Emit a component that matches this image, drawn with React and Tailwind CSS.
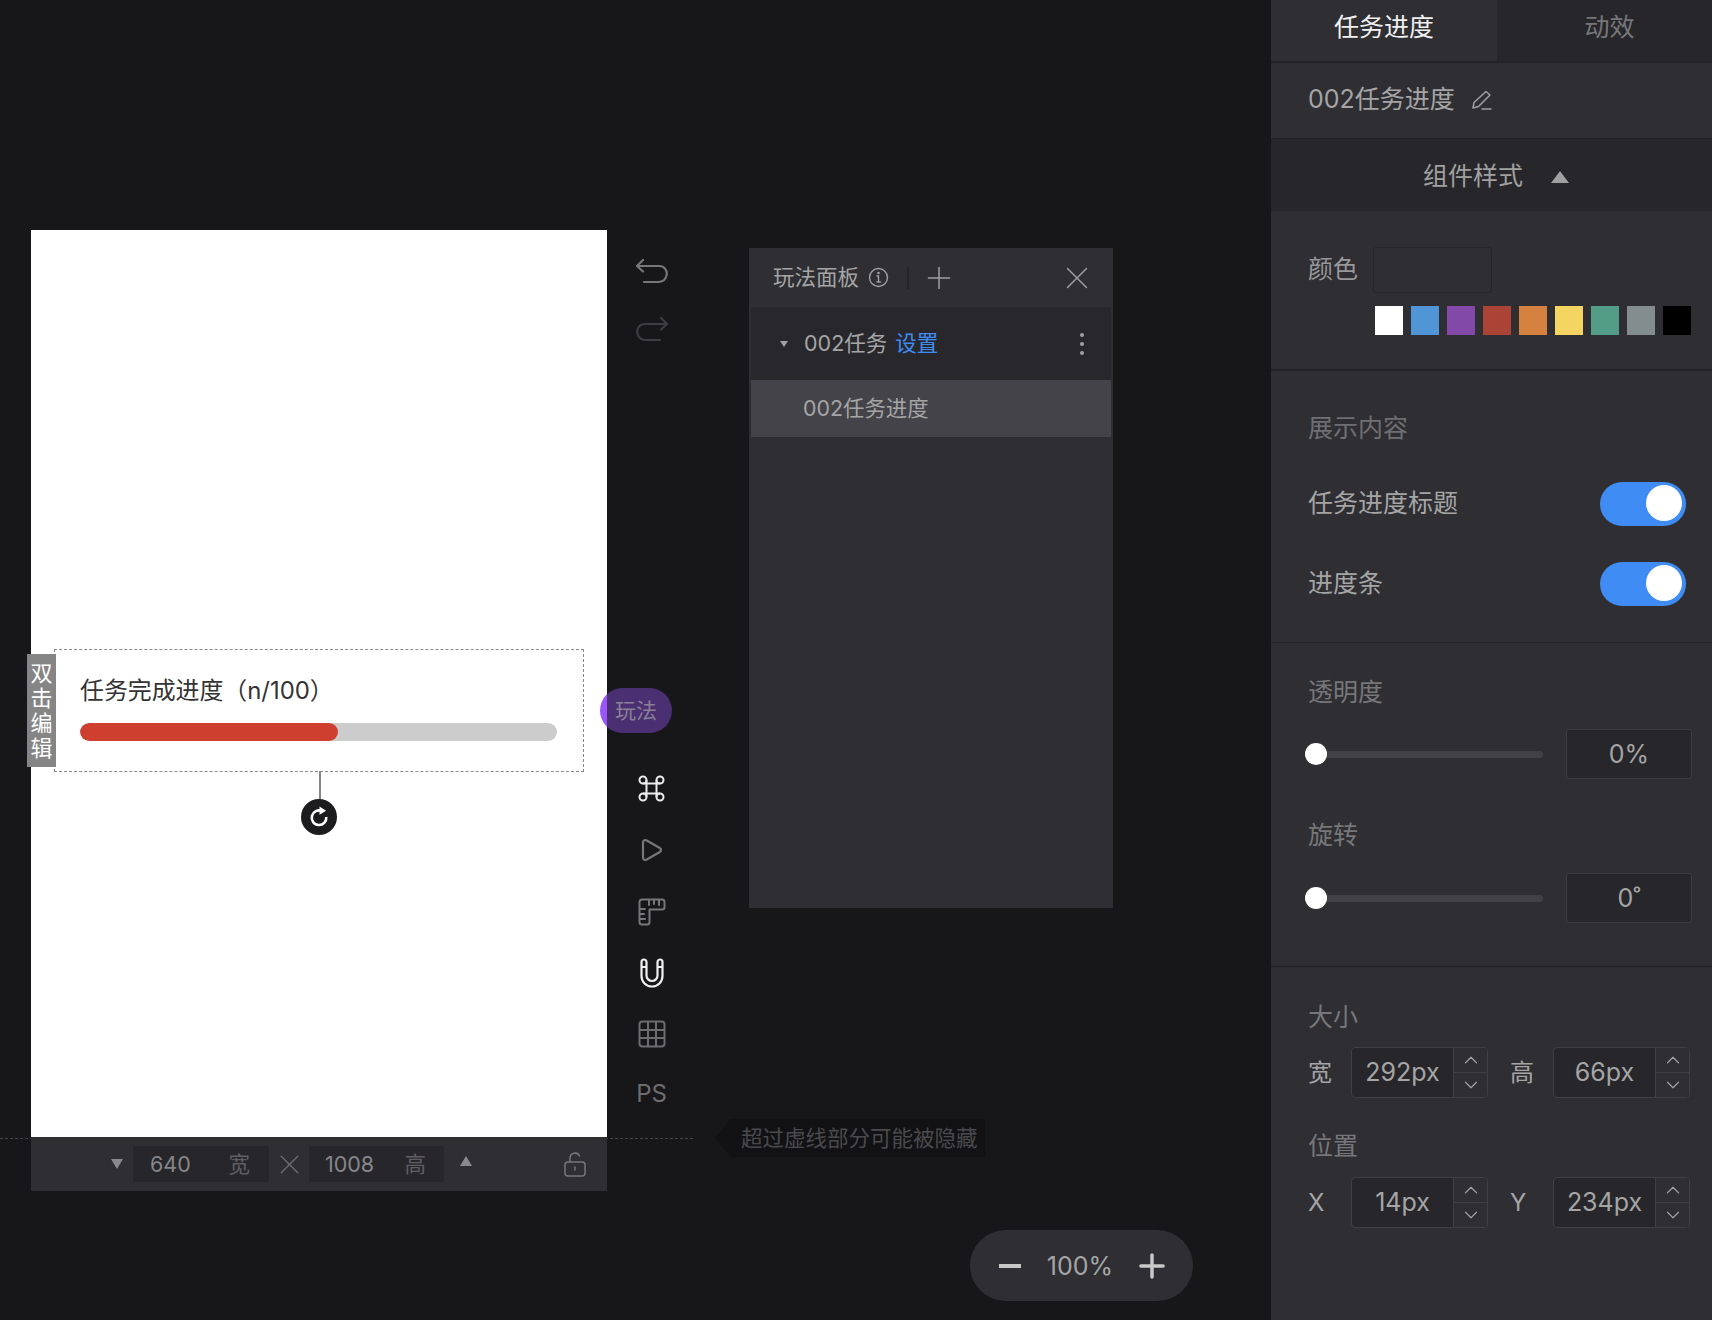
import React from 'react';
import { X, Plus, ChevronUp, ChevronDown } from 'lucide-react';

const swatches = ['#ffffff', '#5095d6', '#8249a8', '#ac4337', '#d5813f', '#f5d562', '#539c85', '#848d8e', '#000000'];

function UndoIcon() {
    return (
        <svg width="32" height="30" viewBox="0 0 32 30" fill="none" stroke="#77777a" strokeWidth="2.2" strokeLinecap="round" strokeLinejoin="round">
            <path d="M7 2 1 8l6 5.5" />
            <path d="M1 8h22a7.5 7.5 0 0 1 7.5 9.5c-1 4-4 6.500-8 6.500H8" />
        </svg>
    );
}

function RedoIcon() {
    return (
        <svg width="32" height="30" viewBox="0 0 32 30" fill="none" stroke="#3d3d41" strokeWidth="2.2" strokeLinecap="round" strokeLinejoin="round">
            <path d="M25 2l6 6-6 5.500" />
            <path d="M31 8H9a7.500 7.500 0 0 0-7.500 9.500c1 4 4 6.500 8 6.500H24" />
        </svg>
    );
}

function CommandIcon() {
    return (
        <svg width="27" height="27" viewBox="0 0 27 27" fill="none" stroke="#ececec" strokeWidth="2">
            <circle cx="5" cy="5" r="3.500" />
            <circle cx="22" cy="5" r="3.500" />
            <circle cx="5" cy="22" r="3.500" />
            <circle cx="22" cy="22" r="3.500" />
            <path d="M8.500 5v17M18.500 5v17M5 8.500h17M5 18.500h17" />
        </svg>
    );
}

function PlayIcon() {
    return (
        <svg width="22" height="24" viewBox="0 0 22 24" fill="none" stroke="#77777a" strokeWidth="2.2" strokeLinejoin="round">
            <path d="M2 4.500c0-2 1.700-3 3.300-2.200l13.500 7.700c1.600 1 1.600 3 0 4L5.300 21.700C3.700 22.500 2 21.500 2 19.500z" />
        </svg>
    );
}

function RulerIcon() {
    return (
        <svg width="28" height="28" viewBox="0 0 28 28" fill="none" stroke="#77777a" strokeWidth="2" strokeLinecap="round" strokeLinejoin="round">
            <path d="M4 1.500h20a2.500 2.500 0 0 1 2.500 2.500v5a2.500 2.500 0 0 1-2.500 2.500H11.500V24a2.500 2.500 0 0 1-2.500 2.500H4A2.500 2.500 0 0 1 1.500 24V4A2.500 2.500 0 0 1 4 1.500z" />
            <path d="M11 2v5M16 2v4M21 2v5M2 11h5M2 16h4M2 21h5" />
        </svg>
    );
}

function MagnetIcon() {
    return (
        <svg width="24" height="30" viewBox="0 0 24 30" fill="none" stroke="#f0f0f0" strokeWidth="2.2" strokeLinecap="round" strokeLinejoin="round">
            <path d="M1.500 4a2.500 2.500 0 0 1 5 0v13.500a5.500 5.500 0 0 0 11 0V4a2.500 2.500 0 0 1 5 0v14a10.500 10.500 0 0 1-21 0z" />
            <path d="M2 9h4M18 9h4" />
        </svg>
    );
}

function GridIcon() {
    return (
        <svg width="28" height="28" viewBox="0 0 28 28" fill="none" stroke="#6d6d70" strokeWidth="2">
            <rect x="1.500" y="1.500" width="25" height="25" rx="3" />
            <path d="M10 2v24M18 2v24M2 10h24M2 18h24" />
        </svg>
    );
}

function PencilIcon() {
    return (
        <svg width="22" height="22" viewBox="0 0 22 22" fill="none" stroke="#a0a0a0" strokeWidth="1.500" strokeLinecap="round" strokeLinejoin="round">
            <path d="M15 2.500 19 6 7.500 17.500 2 19l1-5.500z" />
            <path d="M11 20h9" />
        </svg>
    );
}

function InfoIcon() {
    return (
        <svg width="21" height="21" viewBox="0 0 21 21" fill="none" stroke="#a0a0a0" strokeWidth="1.400" strokeLinecap="round">
            <circle cx="10.500" cy="10.500" r="9" />
            <path d="M9 9h1.500v6M9 15h3.500" />
            <circle cx="10.500" cy="6" r="0.600" />
        </svg>
    );
}

function RotateIcon() {
    return (
        <svg width="22" height="22" viewBox="0 0 22 22" fill="none" stroke="#ffffff" strokeWidth="2.600">
            <path d="M14 5a7.300 7.300 0 1 0 4.300 6" />
            <path d="M11.500 0.500 18 4.800l-6.500 4z" fill="#ffffff" stroke="none" />
        </svg>
    );
}

function LockIcon() {
    return (
        <svg width="22" height="25" viewBox="0 0 22 25" fill="none" stroke="#77777a" strokeWidth="1.500" strokeLinecap="round">
            <rect x="1" y="10" width="20" height="14" rx="3" />
            <path d="M6 10V6a5 5 0 0 1 9.500-2" />
            <path d="M11 15v3" />
        </svg>
    );
}

function Toggle() {
    return (
        <div className="w-[86px] h-[44px] rounded-full bg-[#3f8cf5] relative">
            <div className="absolute left-[46px] top-[3px] w-[36px] h-[36px] rounded-full bg-white"></div>
        </div>
    );
}

function SliderRow({ value, className }) {
    return (
        <div className={"flex items-center pl-[34px] " + className}>
            <div className="w-[238px] h-[7px] rounded-full bg-[#414146] relative">
                <div className="absolute -left-[0px] -top-[8px] w-[22px] h-[22px] rounded-full bg-white"></div>
            </div>
            <div className="ml-[23px] w-[126px] h-[50px] pt-[2px] flex items-center justify-center rounded-[3px] border border-[#3c3c41] bg-[#27272b] text-[25px] text-[#a5a5a5]">
                {value}
            </div>
        </div>
    );
}

function Stepper({ value }) {
    return (
        <div className="flex w-[137px] h-full rounded-[4px] border border-[#3f3f44] bg-[#27272b]">
            <div className="w-[101px] flex items-center justify-center text-[25px] text-[#a5a5a5]">{value}</div>
            <div className="flex-1 flex flex-col border-l border-[#3f3f44] bg-[#2e2e33] rounded-r-[4px] text-[#a0a0a0]">
                <div className="flex-1 flex items-center justify-center border-b border-[#3f3f44]">
                    <ChevronUp size={22} strokeWidth={1.300} />
                </div>
                <div className="flex-1 flex items-center justify-center">
                    <ChevronDown size={22} strokeWidth={1.300} />
                </div>
            </div>
        </div>
    );
}

function StepperRow({ a, b, valueA, valueB }) {
    return (
        <div className="h-[51px] flex items-center pl-[37px]">
            <div className="w-[43px] text-[24px] text-[#a5a5a5]">{a}</div>
            <Stepper value={valueA} />
            <div className="w-[65px] pl-[22px] text-[24px] text-[#a5a5a5]">{b}</div>
            <Stepper value={valueB} />
        </div>
    );
}

function Canvas() {
    return (
        <div className="w-[576px] shrink-0">
            <div className="h-[907px] bg-white relative">
                <div className="absolute left-[23px] top-[419px] w-[530px] h-[123px] border border-dashed border-[#8a8a8a] pl-[25px] pt-[22px]">
                    <div className="text-[23.900px] leading-[38px] text-[#333333] whitespace-nowrap">任务完成进度（n/100）</div>
                    <div className="mt-[13px] w-[477px] h-[18px] rounded-full bg-[#cccccc] overflow-hidden">
                        <div className="w-[258px] h-full rounded-full bg-[#cf3f2f]"></div>
                    </div>
                </div>
                <div className="absolute -left-[4px] top-[424px] w-[29px] h-[113px] bg-[#858585] flex items-center justify-center text-center text-[22px] leading-[25px] text-white">
                    双<br />击<br />编<br />辑
                </div>
                <div className="absolute left-[288px] top-[541px] w-[2px] h-[30px] bg-[#858585]"></div>
                <div className="absolute left-[270px] top-[569px] w-[36px] h-[36px] rounded-full bg-[#1c1c1f] flex items-center justify-center">
                    <RotateIcon />
                </div>
            </div>
            <div className="h-[54px] bg-[#2e2e33] relative z-10 flex items-center text-[21.500px] text-[#86868a]">
                <div className="ml-[80px] w-0 h-0 border-x-[6px] border-x-transparent border-t-[10px] border-t-[#8a8a8e]"></div>
                <div className="ml-[10px] w-[136px] h-[36px] rounded-[3px] bg-[#27272b] flex items-center justify-between pl-[17px] pr-[19px]">
                    <span>640</span><span className="text-[#5f5f63]">宽</span>
                </div>
                <div className="w-[40px] flex justify-center text-[#6d6d70]"><X size={33} strokeWidth={1} /></div>
                <div className="w-[135px] h-[36px] rounded-[3px] bg-[#27272b] flex items-center justify-between pl-[16px] pr-[18px]">
                    <span>1008</span><span className="text-[#5f5f63]">高</span>
                </div>
                <div className="ml-[16px] -mt-[6px] w-0 h-0 border-x-[6px] border-x-transparent border-b-[10px] border-b-[#8a8a8e]"></div>
                <div className="ml-[92px]"><LockIcon /></div>
            </div>
        </div>
    );
}

function ToolColumn() {
    return (
        <div className="w-[89px] shrink-0 flex flex-col items-center pt-[14px]">
            <div className="h-[58px] flex items-center"><UndoIcon /></div>
            <div className="h-[58px] flex items-center"><RedoIcon /></div>
            <div className="relative z-20 mt-[328px] mb-[24px] self-start -ml-[7px] w-[72px] h-[45px] rounded-full bg-[linear-gradient(90deg,#9a55fb_7px,#4a2f73_7px)] flex items-center justify-center text-[21px] text-[#8b8194]">
                玩法
            </div>
            <div className="h-[62px] flex items-center"><CommandIcon /></div>
            <div className="h-[62px] flex items-center"><PlayIcon /></div>
            <div className="h-[61px] flex items-center"><RulerIcon /></div>
            <div className="h-[61px] flex items-center"><MagnetIcon /></div>
            <div className="h-[61px] flex items-center"><GridIcon /></div>
            <div className="h-[60px] flex items-center text-[24px] text-[#6d6d70]">PS</div>
        </div>
    );
}

function PlayPanel() {
    return (
        <div className="ml-[53px] mt-[18px] w-[364px] h-[660px] bg-[#2e2e33] shrink-0 flex flex-col">
            <div className="h-[59px] flex items-center pl-[24px] text-[21.500px] text-[#a5a5a5]">
                <span>玩法面板</span>
                <span className="ml-[9px]"><InfoIcon /></span>
                <span className="ml-[18px] w-[2px] h-[22px] bg-[#252529]"></span>
                <span className="ml-[12px] text-[#a0a0a0]"><Plus size={36} strokeWidth={1} /></span>
                <span className="ml-auto mr-[17px] text-[#a0a0a0]"><X size={38} strokeWidth={0.900} /></span>
            </div>
            <div className="mx-[2px] h-[73px] bg-[#28282c] flex items-center text-[21.500px] text-[#a5a5a5]">
                <div className="ml-[29px] w-0 h-0 border-x-[4px] border-x-transparent border-t-[6px] border-t-[#a0a0a0]"></div>
                <span className="ml-[16px]">002任务</span>
                <span className="ml-[8px] text-[#3f8cf3]">设置</span>
                <div className="ml-auto mr-[27px] flex flex-col gap-[5px]">
                    <div className="w-[4px] h-[4px] rounded-full bg-[#a0a0a0]"></div>
                    <div className="w-[4px] h-[4px] rounded-full bg-[#a0a0a0]"></div>
                    <div className="w-[4px] h-[4px] rounded-full bg-[#a0a0a0]"></div>
                </div>
            </div>
            <div className="mx-[2px] h-[57px] bg-[#434349] flex items-center pl-[52px] text-[21.400px] text-[#a5a5a5]">002任务进度</div>
        </div>
    );
}

function SidePanel() {
    return (
        <div className="w-[441px] h-full shrink-0 bg-[#2e2e33] flex flex-col">
            <div className="h-[63px] flex border-b-2 border-[#232327] text-[25px]">
                <div className="w-[226px] pb-[6px] flex items-center justify-center text-[#f0f0f0]">任务进度</div>
                <div className="flex-1 pb-[6px] flex items-center justify-center pl-[10px] bg-[#27272b] text-[#77777a]">动效</div>
            </div>
            <div className="h-[75px] pb-[2px] flex items-center pl-[37px] text-[25px] text-[#a5a5a5]">
                <span>002任务进度</span>
                <span className="ml-[16px]"><PencilIcon /></span>
            </div>
            <div className="h-[73px] pt-[4px] bg-[#27272b] border-t border-[#232327] flex items-center pl-[152px] text-[25px] text-[#a0a0a0]">
                <span>组件样式</span>
                <div className="ml-[28px] w-0 h-0 border-x-[9px] border-x-transparent border-b-[12px] border-b-[#a0a0a0]"></div>
            </div>
            <div className="h-[160px] border-b-2 border-[#232327] pt-[36px]">
                <div className="flex items-center pl-[37px]">
                    <span className="w-[65px] text-[25px] text-[#98989a]">颜色</span>
                    <div className="w-[119px] h-[46px] rounded-[3px] border border-[#26262a]"></div>
                </div>
                <div className="mt-[13px] ml-[104px] flex gap-[8px]">
                    {swatches.map((c) => (
                        <div key={c} className="w-[28px] h-[29px]" style={{ backgroundColor: c }}></div>
                    ))}
                </div>
            </div>
            <div className="h-[272px] border-b border-[#26262a] pl-[37px]">
                <div className="pt-[38px] text-[25px] leading-[38px] text-[#6f6f73]">展示内容</div>
                <div className="mt-[35px] flex items-center justify-between h-[44px] text-[25px] text-[#a5a5a5] w-[378px]">
                    <span>任务进度标题</span><Toggle />
                </div>
                <div className="mt-[36px] flex items-center justify-between h-[44px] text-[25px] text-[#a5a5a5] w-[378px]">
                    <span>进度条</span><Toggle />
                </div>
            </div>
            <div className="h-[324px] border-b border-[#1f1f23]">
                <div className="pt-[30px] pl-[37px] text-[25px] leading-[38px] text-[#77777a]">透明度</div>
                <SliderRow value="0%" className="mt-[18px]" />
                <div className="pt-[37px] pl-[37px] text-[25px] leading-[38px] text-[#77777a]">旋转</div>
                <SliderRow value="0˚" className="mt-[19px]" />
            </div>
            <div className="flex-1">
                <div className="pt-[31px] pl-[37px] text-[25px] leading-[38px] text-[#77777a]">大小</div>
                <div className="mt-[11px]"><StepperRow a="宽" b="高" valueA="292px" valueB="66px" /></div>
                <div className="mt-[29px] pl-[37px] text-[25px] leading-[38px] text-[#77777a]">位置</div>
                <div className="mt-[12px]"><StepperRow a="X" b="Y" valueA="14px" valueB="234px" /></div>
            </div>
        </div>
    );
}

export default function App() {
    return (
        <div className="w-[1712px] h-[1320px] overflow-hidden bg-[#17171a] flex font-['Inter','Noto_Sans_CJK_SC',sans-serif]">
            <div className="w-[1271px] shrink-0 h-full relative flex items-start pt-[230px] pl-[31px]">
                <div className="absolute left-0 top-[1138px] w-[693px] border-t border-dashed border-[#444448]"></div>
                <Canvas />
                <ToolColumn />
                <PlayPanel />
                {/* tooltip and zoom control float over the canvas */}
                <div className="absolute left-[715px] top-[1119px] flex items-center">
                    <div className="w-0 h-0 border-y-[19px] border-y-transparent border-r-[16px] border-r-[#121214]"></div>
                    <div className="h-[38px] w-[254px] bg-[#121214] rounded-r-[3px] flex items-center pl-[10px] text-[21.500px] text-[#4a4a4d] whitespace-nowrap">超过虚线部分可能被隐藏</div>
                </div>
                <div className="absolute left-[970px] top-[1230px] w-[223px] h-[71px] rounded-full bg-[#2e2e33] flex items-center justify-between pl-[29px] pr-[22px] text-[25px] text-[#a5a5a5]">
                    <span className="w-[22px] h-[4px] bg-[#c8c8c8]"></span>
                    <span className="ml-[6px] pt-[2px]">100%</span>
                    <Plus size={38} strokeWidth={2.200} className="text-[#c8c8c8]" />
                </div>
            </div>
            <SidePanel />
        </div>
    );
}
